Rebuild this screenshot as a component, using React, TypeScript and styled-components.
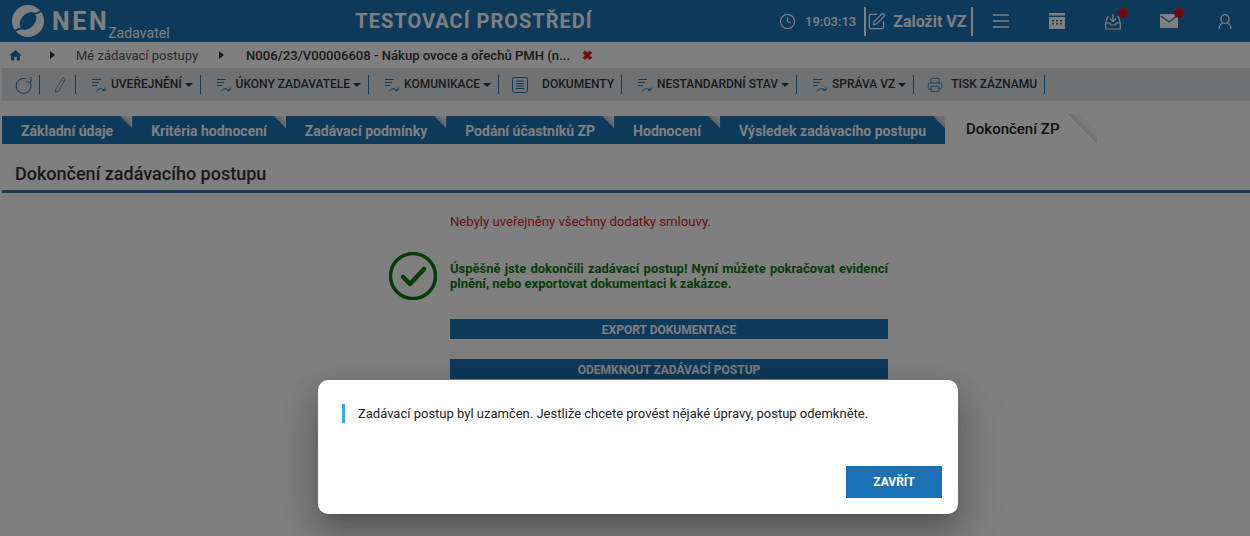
import React from 'react';
import styled, { createGlobalStyle } from 'styled-components';
import { Clock, SquarePen, Printer } from 'lucide-react';
import { MdHome } from 'react-icons/md';

const BLUE = '#1a72b5';

const GlobalStyle = createGlobalStyle`
  html, body { margin: 0; padding: 0; background: #fff; }
  body { font-family: Roboto, "Liberation Sans", sans-serif; overflow: hidden; }
  * { box-sizing: border-box; }
`;

const Page = styled.div`
  position: relative;
  width: 1250px;
  height: 536px;
  overflow: hidden;
  background: #fff;
`;

const Header = styled.header`
  height: 42px;
  background: ${BLUE};
  display: flex;
  align-items: center;
  color: #fff;
`;

const Brand = styled.div`
  width: 340px;
  flex: none;
  display: flex;
  align-items: center;
  padding-left: 12px;
  height: 42px;
`;

const BrandName = styled.span`
  font-size: 25px;
  font-weight: 700;
  letter-spacing: 2.6px;
  margin-left: 8px;
`;

const BrandRole = styled.span`
  font-size: 14px;
  align-self: flex-end;
  margin: 0 0 1px -1px;
  line-height: 16px;
  letter-spacing: 0.05px;
`;

const EnvTitle = styled.div`
  width: 268px;
  flex: none;
  text-align: center;
  font-size: 20px;
  font-weight: 700;
  letter-spacing: 1px;
`;

const HeaderTools = styled.div`
  flex: 1;
  display: flex;
  align-items: center;
  padding-left: 171px;
  height: 42px;
`;

const Time = styled.span`
  font-size: 13px;
  font-weight: 500;
  margin: 0 8px 0 9px;
`;

const NewTender = styled.div`
  display: flex;
  align-items: center;
  flex: none;
  height: 29px;
  padding: 0 4px 0 1px;
  border-left: 2px solid #fff;
  border-right: 2px solid #fff;
  font-size: 16px;
  font-weight: 700;
  gap: 7px;
  white-space: nowrap;
`;

const HeaderIcons = styled.div`
  display: flex;
  align-items: center;
  flex: none;
`;

const HeaderIcon = styled.div<{ $dot?: boolean }>`
  position: relative;
  width: 56px;
  height: 42px;
  display: flex;
  align-items: center;
  justify-content: center;
  &::after {
    content: '';
    display: ${(p) => (p.$dot ? 'block' : 'none')};
    position: absolute;
    left: 33px;
    top: 8px;
    width: 10px;
    height: 10px;
    border-radius: 50%;
    background: #e0141c;
  }
`;

const Breadcrumb = styled.nav`
  height: 26px;
  display: flex;
  align-items: center;
  padding-left: 8px;
  font-size: 13px;
  color: #555;
`;

const Arrow = styled.span<{ $left: number; $right: number }>`
  width: 0;
  height: 0;
  border-left: 5px solid #333;
  border-top: 4px solid transparent;
  border-bottom: 4px solid transparent;
  margin: 0 ${(p) => p.$right}px 0 ${(p) => p.$left}px;
`;

const CrumbStrong = styled.span`
  font-size: 13.1px;
  font-weight: 500;
  color: #333;
`;

const CloseMark = styled.span`
  color: #d8141c;
  font-size: 13px;
  font-weight: 700;
  margin-left: 12px;
  line-height: 1;
`;

const Toolbar = styled.div`
  height: 33px;
  margin-left: 2px;
  background: #dfe3e6;
  display: flex;
  align-items: center;
`;

const ToolItem = styled.div<{ $gap?: number; $left?: number; $right?: number }>`
  display: flex;
  align-items: center;
  height: 19px;
  padding: 0 ${(p) => p.$right ?? 7}px 0 ${(p) => p.$left ?? 15}px;
  gap: ${(p) => p.$gap ?? 5}px;
  border-right: 1px solid ${BLUE};
`;

const ToolLabel = styled.span`
  margin-top: -2px;
  font-size: 12px;
  font-weight: 500;
  color: #333;
  white-space: nowrap;
`;

const Caret = styled.span`
  width: 0;
  height: 0;
  margin-left: -2px;
  border-top: 4px solid #333;
  border-left: 4px solid transparent;
  border-right: 4px solid transparent;
`;

const TabStrip = styled.div`
  display: flex;
  align-items: flex-end;
  height: 30px;
  margin: 13px 0 0 2px;
`;

const Tab = styled.div<{ $z: number; $active?: boolean }>`
  position: relative;
  z-index: ${(p) => p.$z};
  height: ${(p) => (p.$active ? 30 : 28)}px;
  margin-right: -16px;
  padding: ${(p) => (p.$active ? '0 38px 0 21px' : '0 35px 0 19px')};
  font-size: ${(p) => (p.$active ? 15 : 14)}px;
  font-weight: ${(p) => (p.$active ? 500 : 700)};
  line-height: ${(p) => (p.$active ? 30 : 31)}px;
  color: ${(p) => (p.$active ? '#222' : '#fff')};
  white-space: nowrap;
  & > span { position: relative; z-index: 2; }
  &::before {
    content: '';
    position: absolute;
    inset: 0;
    z-index: 1;
    background: ${(p) => (p.$active ? '#fff' : BLUE)};
    clip-path: ${(p) =>
      p.$active
        ? 'polygon(0 0, calc(100% - 30px) 0, 100% 100%, 0 100%)'
        : 'polygon(0 0, calc(100% - 28px) 0, 100% 100%, 0 100%)'};
  }
  &::after {
    content: '';
    position: absolute;
    top: 0;
    z-index: 0;
    right: ${(p) => (p.$active ? 0 : 16)}px;
    width: ${(p) => (p.$active ? 30 : 12)}px;
    height: ${(p) => (p.$active ? 30 : 12)}px;
    background: linear-gradient(
      45deg,
      ${(p) => (p.$active ? '#d4d4d4 50%, #f0f0f0 60%, #fff 70%' : '#c4c4c4 50%, #dcdcdc 72%, #f6f6f6 100%')}
    );
    clip-path: polygon(0 0, 100% 0, 100% 100%);
  }
`;

const SectionTitle = styled.h2`
  margin: 0 0 0 2px;
  height: 49px;
  padding: 19px 0 0 13px;
  border-bottom: 3px solid ${BLUE};
  font-size: 18px;
  line-height: 22px;
  font-weight: 500;
  color: #333;
`;

const Content = styled.main`
  width: 438px;
  margin-left: 450px;
  padding-top: 21px;
  font-size: 13px;
`;

const ErrorText = styled.p`
  margin: 0;
  line-height: 15px;
  font-size: 13.15px;
  color: #d01c22;
`;

const SuccessRow = styled.div`
  position: relative;
  margin-top: 32px;
`;

const SuccessText = styled.p`
  margin: 0;
  font-weight: 700;
  line-height: 15px;
  text-align: justify;
  color: #0b7a0b;
`;

const CheckBadge = styled.svg`
  position: absolute;
  left: -61px;
  top: -9px;
`;

const ActionList = styled.div`
  display: flex;
  flex-direction: column;
  gap: 20px;
  margin-top: 28px;
`;

const ActionButton = styled.div`
  height: 20px;
  background: ${BLUE};
  color: #fff;
  font-size: 12px;
  font-weight: 700;
  line-height: 22px;
  text-align: center;
`;

const Backdrop = styled.div`
  position: absolute;
  inset: 0;
  z-index: 20;
  background: rgba(0, 0, 0, 0.5);
`;

const Modal = styled.div`
  position: absolute;
  left: 318px;
  top: 380px;
  width: 640px;
  height: 134px;
  z-index: 21;
  padding: 24px 16px 16px 24px;
  background: #fff;
  border-radius: 10px;
  box-shadow: 0 11px 15px -7px rgba(0, 0, 0, 0.2), 0 24px 38px 3px rgba(0, 0, 0, 0.14),
    0 9px 46px 8px rgba(0, 0, 0, 0.12);
  display: flex;
  flex-direction: column;
  justify-content: space-between;
`;

const ModalMessage = styled.p`
  margin: 0;
  padding-left: 13px;
  border-left: 3px solid #3aa6ee;
  font-size: 13px;
  line-height: 19px;
  color: #222;
`;

const ModalClose = styled.button`
  align-self: flex-end;
  width: 96px;
  height: 32px;
  border: 0;
  padding: 0;
  background: ${BLUE};
  color: #fff;
  font-family: inherit;
  font-size: 12px;
  font-weight: 700;
`;

const FlowIcon = () => (
  <svg width="15" height="18" viewBox="0 0 15 18" fill="none" stroke={BLUE} strokeWidth="1">
    <path d="M1 3.5h9M1 6.5h7M1 9.5h5" />
    <path d="M5 15.5c1.500-3 5.500-3.600 8-1.500M14 11.500v3h-3" />
  </svg>
);

const toolItems = ['UVEŘEJNĚNÍ', 'ÚKONY ZADAVATELE', 'KOMUNIKACE'];
const toolItemsAfter = ['NESTANDARDNÍ STAV', 'SPRÁVA VZ'];
const tabs = [
  'Základní údaje',
  'Kritéria hodnocení',
  'Zadávací podmínky',
  'Podání účastníků ZP',
  'Hodnocení',
  'Výsledek zadávacího postupu',
];

export default function App() {
  return (
    <Page>
      <GlobalStyle />
      <Header>
        <Brand>
          <svg width="32" height="32" viewBox="0 0 32 32" fill="none">
            <circle cx="16" cy="16" r="16" fill="#fff" />
            <ellipse cx="16" cy="16" rx="10" ry="7" transform="rotate(-50 16 16)" fill={BLUE} />
            <path d="M21 9C25 8.500 29 7 32 3" stroke={BLUE} strokeWidth="1.800" />
            <path d="M11 23C7 23.500 3 25 0 29" stroke={BLUE} strokeWidth="1.800" />
          </svg>
          <BrandName>NEN</BrandName>
          <BrandRole>Zadavatel</BrandRole>
        </Brand>
        <EnvTitle>TESTOVACÍ PROSTŘEDÍ</EnvTitle>
        <HeaderTools>
          <Clock size={17} strokeWidth={1.6} />
          <Time>19:03:13</Time>
          <NewTender>
            <SquarePen size={19} strokeWidth={1.6} />
            Založit VZ
          </NewTender>
          <HeaderIcons>
            <HeaderIcon>
              <svg width="18" height="16" viewBox="0 0 18 16" stroke="#fff" strokeWidth="1.500">
                <path d="M1 2h16M1 8h16M1 14h16" />
              </svg>
            </HeaderIcon>
            <HeaderIcon>
              <svg width="16" height="16" viewBox="0 0 16 16" fill="#fff">
                <path d="M0 0h16v2.500H0zM0 4h16v12H0z" />
                <path d="M3 7h2v1.500H3zM7 7h2v1.500H7zM11 7h2v1.500h-2zM3 10h2v1.500H3zM7 10h2v1.500H7zM11 10h2v1.500h-2z" fill={BLUE} />
              </svg>
            </HeaderIcon>
            <HeaderIcon $dot>
              <svg width="16" height="17" viewBox="0 0 16 17" fill="none" stroke="#fff" strokeWidth="1.200">
                <path d="M8 1v7M5 5.500L8 8.500l3-3M4 4H2.500L.7 10v6h14.600v-6L13.500 4H12M.7 10h4l1 2h4.600l1-2h4" />
              </svg>
            </HeaderIcon>
            <HeaderIcon $dot>
              <svg width="18" height="14" viewBox="0 0 18 14" fill="#fff">
                <path d="M0 0h18v14H0z" />
                <path d="M1 2l8 6 8-6" fill="none" stroke={BLUE} strokeWidth="1.200" />
              </svg>
            </HeaderIcon>
            <HeaderIcon>
              <svg width="14" height="15" viewBox="0 0 14 15" fill="none" stroke="#fff" strokeWidth="1.300">
                <ellipse cx="7" cy="5" rx="4" ry="4.300" />
                <path d="M1 15c0-3 1.500-5 3.800-6M13 15c0-3-1.500-5-3.800-6" />
              </svg>
            </HeaderIcon>
          </HeaderIcons>
        </HeaderTools>
      </Header>

      <Breadcrumb>
        <MdHome size={15} color={BLUE} />
        <Arrow $left={27} $right={21} />
        Mé zádavací postupy
        <Arrow $left={21} $right={22} />
        <CrumbStrong>N006/23/V00006608 - Nákup ovoce a ořechů PMH (n...</CrumbStrong>
        <CloseMark>✖</CloseMark>
      </Breadcrumb>

      <Toolbar>
        <ToolItem $left={13} $right={6}>
          <svg width="18" height="18" viewBox="0 0 18 18" fill="none" stroke={BLUE} strokeWidth="1">
            <path d="M10.500 2.700A7.500 7.500 0 1 0 15 6" />
            <path d="M16 1v5h-5" />
          </svg>
        </ToolItem>
        <ToolItem $left={12}>
          <svg width="16" height="18" viewBox="0 0 16 18" fill="none" stroke="#8c8c8c" strokeWidth="1">
            <path d="M11 1.500l2.500 1.500-7 12-3 1.500.3-3.300zM9.500 4l2.500 1.500" />
          </svg>
        </ToolItem>
        {toolItems.map((label) => (
          <ToolItem key={label}>
            <FlowIcon />
            <ToolLabel>{label}</ToolLabel>
            <Caret />
          </ToolItem>
        ))}
        <ToolItem $left={13} $gap={14}>
          <svg width="16" height="16" viewBox="0 0 16 16" fill="none" stroke={BLUE} strokeWidth="1">
            <rect x=".5" y=".5" width="15" height="15" rx="2" />
            <path d="M4 4h8M4 6.500h8M4 9h8M4 11.500h8" />
          </svg>
          <ToolLabel>DOKUMENTY</ToolLabel>
        </ToolItem>
        {toolItemsAfter.map((label) => (
          <ToolItem key={label}>
            <FlowIcon />
            <ToolLabel>{label}</ToolLabel>
            <Caret />
          </ToolItem>
        ))}
        <ToolItem $left={13} $gap={8}>
          <Printer size={16} color={BLUE} strokeWidth={1.300} />
          <ToolLabel>TISK ZÁZNAMU</ToolLabel>
        </ToolItem>
      </Toolbar>

      <TabStrip>
        {tabs.map((label, i) => (
          <Tab key={label} $z={10 - i}>
            <span>{label}</span>
          </Tab>
        ))}
        <Tab $z={11} $active>
          <span>Dokončení ZP</span>
        </Tab>
      </TabStrip>

      <SectionTitle>Dokončení zadávacího postupu</SectionTitle>

      <Content>
        <ErrorText>Nebyly uveřejněny všechny dodatky smlouvy.</ErrorText>
        <SuccessRow>
          <CheckBadge width="48" height="48" viewBox="0 0 48 48" fill="none" stroke="#0b7a0b">
            <circle cx="24" cy="24" r="22.500" strokeWidth="3.500" />
            <path d="M14 25l7 7 14-15" strokeWidth="4.500" strokeLinecap="round" strokeLinejoin="round" />
          </CheckBadge>
          <SuccessText>
            Úspěšně jste dokončili zadávací postup! Nyní můžete pokračovat evidencí plnění, nebo
            exportovat dokumentaci k zakázce.
          </SuccessText>
        </SuccessRow>
        <ActionList>
          <ActionButton>EXPORT DOKUMENTACE</ActionButton>
          <ActionButton>ODEMKNOUT ZADÁVACÍ POSTUP</ActionButton>
        </ActionList>
      </Content>

      <Backdrop />
      <Modal>
        <ModalMessage>
          Zadávací postup byl uzamčen. Jestliže chcete provést nějaké úpravy, postup odemkněte.
        </ModalMessage>
        <ModalClose>ZAVŘÍT</ModalClose>
      </Modal>
    </Page>
  );
}
